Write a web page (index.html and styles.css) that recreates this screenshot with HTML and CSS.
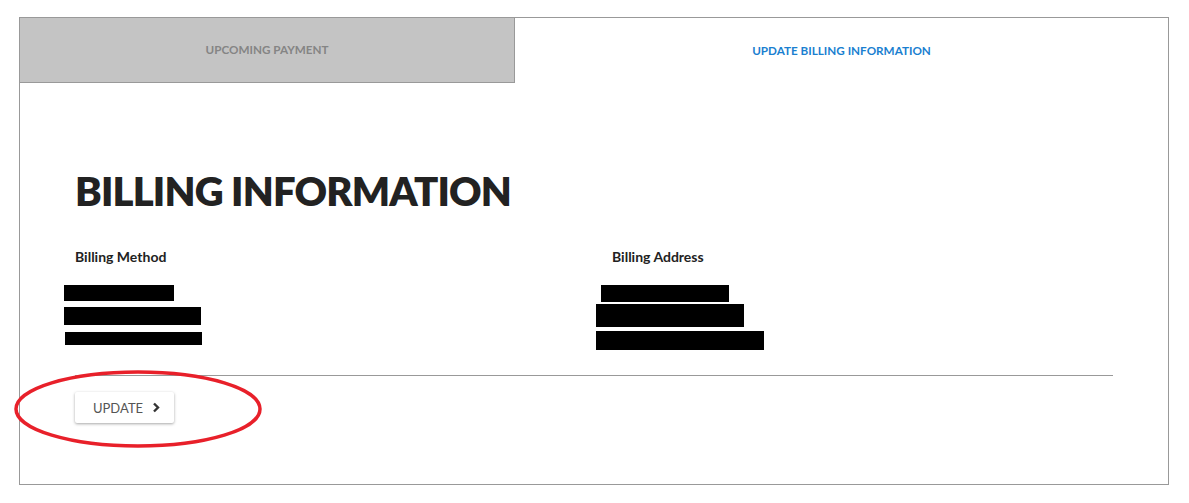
FILE: index.html
```html
<!DOCTYPE html>
<html lang="en">
<head>
  <meta charset="UTF-8">
  <title>Billing Information</title>
  <link rel="stylesheet" href="styles.css">
</head>
<body>
  <div class="panel">
    <div class="tabs">
      <div class="tab tab-off">UPCOMING PAYMENT</div>
      <div class="tab tab-on">UPDATE BILLING INFORMATION</div>
    </div>
    <div class="content">
      <h1>BILLING INFORMATION</h1>
      <div class="cols">
        <div class="col">
          <h4>Billing Method</h4>
          <div class="redact r1"></div>
          <div class="redact r2"></div>
          <div class="redact r3"></div>
        </div>
        <div class="col">
          <h4>Billing Address</h4>
          <div class="redact r4"></div>
          <div class="redact r5"></div>
          <div class="redact r6"></div>
        </div>
      </div>
      <hr class="divider">
      <button class="update-btn">UPDATE
        <svg width="9" height="11" viewBox="0 0 9 11"><path d="M2 1.5 L6 5.5 L2 9.5" fill="none" stroke="#333" stroke-width="2.4"/></svg>
      </button>
    </div>
    <svg class="circle" width="252" height="84" viewBox="0 0 252 84">
      <ellipse cx="125" cy="40" rx="122" ry="37" fill="none" stroke="#e8202a" stroke-width="3.5"/>
    </svg>
  </div>
</body>
</html>
```

FILE: styles.css
```css
body { margin: 0; background: #fff; font-family: Lato, "Liberation Sans", sans-serif; }
.panel { position: relative; margin: 17px 0 0 19px; width: 1148px; height: 466px; border: 1px solid #999; }
.tabs { display: flex; height: 65px; }
.tab { display: flex; align-items: center; justify-content: center; padding-bottom: 2px; font-size: 11.7px; font-weight: 700; }
.tab-off { width: 494px; background: #c4c4c4; color: #858585; border-right: 1px solid #999; border-bottom: 1px solid #999; }
.tab-on { flex: 1; color: #1a7fd0; }
.content { padding: 0 55px 0 55px; }
h1 { margin: 84px 0 0 0; font-size: 40px; line-height: 48px; font-weight: 800; color: #222; letter-spacing: -0.85px; }
.cols { display: grid; grid-template-columns: 537px 1fr; margin-top: 34px; }
h4 { margin: 0 0 20px 0; font-size: 14px; line-height: 16px; font-weight: 700; color: #222; }
.redact { background: #000; }
.r1 { width: 110px; height: 16px; margin-left: -11px; }
.r2 { width: 137px; height: 18px; margin: 6px 0 0 -11px; }
.r3 { width: 137px; height: 13px; margin: 7px 0 0 -10px; }
.r4 { width: 128px; height: 17px; margin: 0 0 0 -11px; }
.r5 { width: 148px; height: 23px; margin: 2px 0 0 -16px; }
.r6 { width: 168px; height: 19px; margin: 4px 0 0 -16px; }
.divider { margin: 25px 0 0 0; border: 0; border-top: 1px solid #999; }
.update-btn { display: flex; align-items: center; gap: 9px; margin-top: 16px; width: 99px; height: 31px; padding: 0 0 0 18px; border: 0; border-radius: 2px; background: #fff; box-shadow: 0 1px 3px rgba(0,0,0,0.35); font-family: Lato, "Liberation Sans", sans-serif; font-size: 13px; color: #555; }
.circle { position: absolute; left: -7px; top: 351px; }
```
